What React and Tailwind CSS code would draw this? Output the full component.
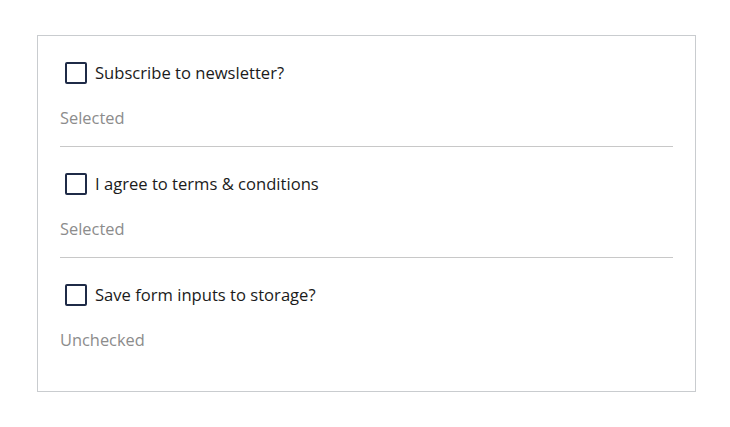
import { useState } from 'react';

const items = [
  { label: 'Subscribe to newsletter?', status: 'Selected' },
  { label: 'I agree to terms & conditions', status: 'Selected' },
  { label: 'Save form inputs to storage?', status: 'Unchecked' },
];

export default function App() {
  const [checked, setChecked] = useState([false, false, false]);

  const toggle = (i) => {
    const next = [...checked];
    next[i] = !next[i];
    setChecked(next);
  };

  return (
    <div className="min-h-screen bg-white pl-[37px] pt-[35px]" style={{ fontFamily: '"Open Sans", "Noto Sans", sans-serif' }}>
      <div className="w-[659px] border border-[#c9cccf] px-[22px] pb-[39px]">
        {items.map((item, i) => (
          <div
            key={i}
            className={`pt-[26px] ${i < items.length - 1 ? 'pb-4 border-b border-[#c8c8c8]' : ''}`}
          >
            <label className="flex items-center h-[22px] ml-[5px] cursor-pointer">
              <span
                onClick={() => toggle(i)}
                className="w-[22px] h-[22px] border-2 border-[#1f2b47] rounded-[2px] bg-white shrink-0"
              />
              <span className="ml-2 pt-px text-[16.6px] text-[#1b1b1b]">{item.label}</span>
            </label>
            <p className="mt-[22px] text-[16.4px] leading-6 text-[#8c8c8c]">{item.status}</p>
          </div>
        ))}
      </div>
    </div>
  );
}
